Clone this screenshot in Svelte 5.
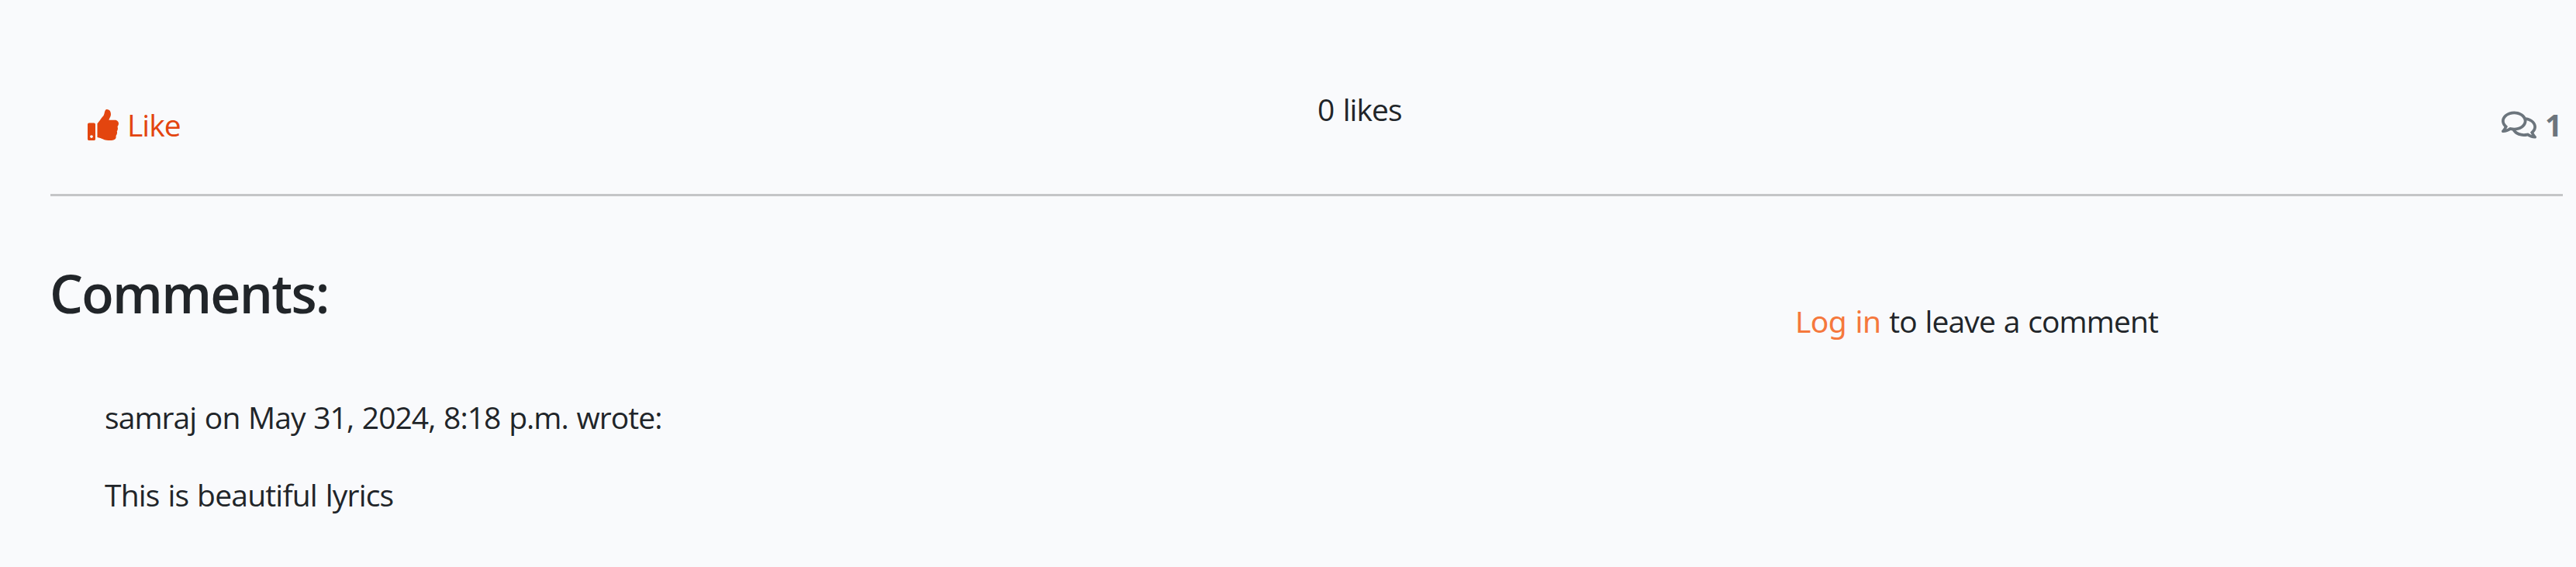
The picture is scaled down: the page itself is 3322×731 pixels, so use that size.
<script>
  const likes = 0;
  const comments = [
    { author: 'samraj', date: 'May 31, 2024, 8:18 p.m.', body: 'This is beautiful lyrics' }
  ];
</script>

<main>
  <section class="actions">
    <a class="like" href="#like">
      <svg viewBox="0 0 512 512" width="40" height="40" aria-hidden="true"><path fill="currentColor" d="M104 224H24c-13.255 0-24 10.745-24 24v240c0 13.255 10.745 24 24 24h80c13.255 0 24-10.745 24-24V248c0-13.255-10.745-24-24-24zM64 472c-13.255 0-24-10.745-24-24s10.745-24 24-24 24 10.745 24 24-10.745 24-24 24zM384 81.452c0 42.416-25.97 66.208-33.277 94.548h101.723c33.397 0 59.397 27.746 59.553 58.098.084 17.938-7.546 37.249-19.439 49.197l-.11.11c9.836 23.337 8.237 56.037-9.308 79.469 8.681 25.895-.069 57.704-16.382 74.757 4.298 17.598 2.244 32.575-6.148 44.632C440.202 511.587 389.616 512 346.839 512l-2.845-.001c-48.287-.017-87.806-17.598-119.56-31.725-15.957-7.099-36.821-15.887-52.651-16.178-6.54-.12-11.783-5.457-11.783-11.998v-213.77c0-3.2 1.282-6.271 3.558-8.521 39.614-39.144 56.648-80.587 89.117-113.111 14.804-14.832 20.188-37.236 25.393-58.902C282.515 39.293 291.817 0 312 0c24 0 72 8 72 81.452z"/></svg>
      <span>Like</span>
    </a>
    <div class="likes">{likes} likes</div>
    <div class="count">
      <svg viewBox="0 0 576 512" width="45" height="40" aria-hidden="true"><path fill="currentColor" d="M532 386.2c27.5-27.1 44-61.1 44-98.2 0-80-76.5-146.1-176.2-157.9C368.3 72.5 294.3 32 208 32 93.1 32 0 103.6 0 192c0 37 16.5 71 44 98.2-15.3 30.7-37.3 54.5-37.7 54.9-6.3 6.7-8.1 16.5-4.4 25 3.6 8.5 12 14 21.2 14 53.5 0 96.7-20.2 125.2-38.8 9.2 2.1 18.7 3.7 28.4 4.9C208.1 407.6 281.8 448 368 448c20.8 0 40.8-2.4 59.8-6.8C456.3 459.7 499.4 480 553 480c9.2 0 17.5-5.5 21.2-14 3.6-8.5 1.9-18.3-4.4-25-.4-.3-22.5-24.1-37.8-54.8zm-392.8-92.3L122.1 305c-14.1 9.1-28.5 16.3-43.1 21.4 2.7-4.7 5.4-9.7 8-14.8l15.5-31.1L77.7 256C64.2 242.6 48 220.7 48 192c0-60.7 73.3-112 160-112s160 51.3 160 112-73.3 112-160 112c-16.5 0-33-1.9-49-5.6l-19.8-4.5zM498.3 352l-24.7 24.4 15.5 31.1c2.6 5.1 5.3 10.1 8 14.8-14.6-5.1-29-12.3-43.1-21.4l-17.1-11.1-19.9 4.6c-16 3.7-32.5 5.6-49 5.6-54 0-102.2-20.1-131.3-49.7C338 339.5 416 272.9 416 192c0-3.4-.4-6.7-.7-10C479.7 196.5 528 238.8 528 288c0 28.7-16.2 50.6-29.7 64z"/></svg>
      <span>{comments.length}</span>
    </div>
  </section>

  <section class="discussion">
    <div>
      <h2>Comments:</h2>
      {#each comments as c}
        <article>
          <p class="meta">{c.author} on {c.date} wrote:</p>
          <p class="body">{c.body}</p>
        </article>
      {/each}
    </div>
    <p class="login"><a href="#login">Log in</a> to leave a comment</p>
  </section>
</main>

<style>
  :global(body) {
    background: #f9fafc;
  }
  main {
    box-sizing: border-box;
    height: 731px;
    padding: 111px 17px 0 65px;
    overflow: hidden;
    background: #f9fafc;
    color: #212529;
    font: 400 39px/60px 'Open Sans', 'Noto Sans', sans-serif;
  }
  a {
    text-decoration: none;
  }
  p,
  h2 {
    margin: 0;
  }
  svg {
    display: block;
  }
  .actions {
    display: grid;
    grid-template-columns: 1634px 1fr auto;
    align-items: start;
    height: 139px;
    border-bottom: 3px solid #c4c5c7;
  }
  .like {
    display: flex;
    gap: 11px;
    padding: 20px 0 0 48px;
    color: #e3450f;
    letter-spacing: -1px;
  }
  .like svg {
    margin-top: 10px;
  }
  .likes {
    letter-spacing: -0.9px;
    word-spacing: 2px;
  }
  .count {
    display: flex;
    gap: 11px;
    padding: 20px 1px 0 0;
    color: #6c757d;
    font-weight: 700;
  }
  .count svg {
    margin-top: 10px;
  }
  .count span {
    width: 22px;
  }
  .discussion {
    display: grid;
    grid-template-columns: 2250px 1fr;
    padding-top: 83px;
  }
  h2 {
    margin-left: -1px;
    font-size: 68px;
    font-weight: 600;
    line-height: 84px;
    letter-spacing: -1.75px;
  }
  article {
    padding: 88px 0 0 70px;
  }
  .meta {
    letter-spacing: -0.94px;
    word-spacing: 1.5px;
  }
  .body {
    margin-top: 40px;
    letter-spacing: -0.8px;
    word-spacing: 1.5px;
  }
  .login {
    padding-top: 48px;
    letter-spacing: -0.88px;
    word-spacing: 1.5px;
  }
  .login a {
    color: #f5783c;
    font-family: 'Noto Sans', sans-serif;
    line-height: 1;
    letter-spacing: -0.65px;
    word-spacing: 2px;
  }
</style>
